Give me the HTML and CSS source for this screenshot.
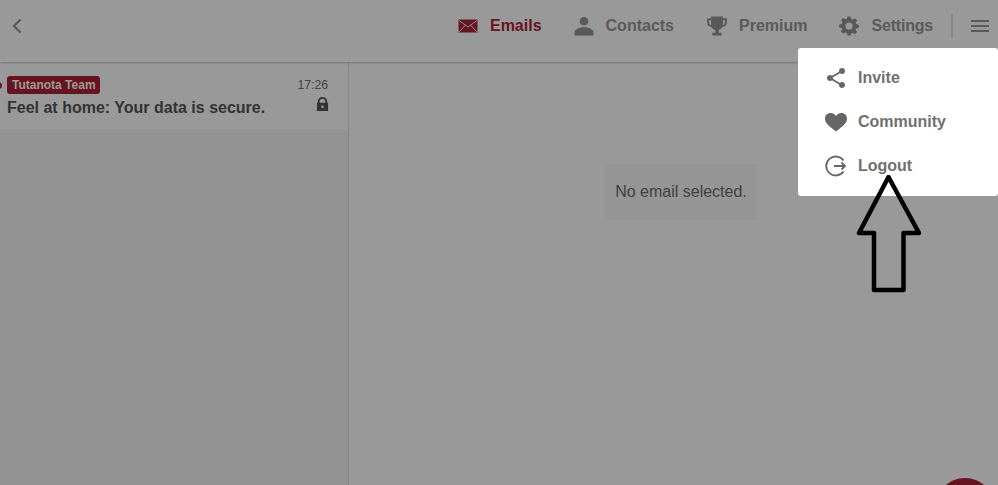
FILE: index.html
```html
<!DOCTYPE html>
<html lang="en">
    <head>
        <meta charset="UTF-8">
        <title>Tutanota</title>
        <link rel="stylesheet" href="styles.css">
    </head>
    <body>

        <header class="header">
            <button class="back" aria-label="Back">
                <svg viewBox="0 0 24 24" width="24" height="24"><path d="M15.500 5.500 9 12l6.500 6.500" fill="none" stroke="#5a5a5a" stroke-width="2.200"/></svg>
            </button>
            <nav class="nav">
                <a class="nav-item active">
                    <svg viewBox="0 0 24 24" width="24" height="24"><path fill="#651522" d="M2.500 5.500h19v13h-19z"/><path d="M3 6.500l9 6.500 9-6.500M3 18l6.500-7M21 18l-6.500-7" fill="none" stroke="#9a8a8c" stroke-width="1"/></svg>
                    <span>Emails</span>
                </a>
                <a class="nav-item contacts">
                    <svg viewBox="-2 -2 28 28" width="24" height="24"><circle cx="12" cy="6.500" r="5" fill="#595959"/><path fill="#595959" d="M1 23v-4c0-3.500 7-5.500 11-5.500s11 2 11 5.500v4z"/></svg>
                    <span>Contacts</span>
                </a>
                <a class="nav-item">
                    <svg viewBox="-2 -2 28 28" width="24" height="24"><path fill="#595959" d="M5 1h14v2h4.500v5c0 3-2 5-5.100 5.300-.8 1.700-2.400 3-4.400 3.400V20h3.500v3h-11v-3H10v-3.300c-2-.4-3.600-1.700-4.400-3.400C2.500 13 .5 11 .5 8V3H5zM2.800 5.300V8c0 1.600.9 2.800 2.200 3.200V5.300zm16.200 0v5.900c1.300-.4 2.200-1.600 2.200-3.200V5.300z"/></svg>
                    <span>Premium</span>
                </a>
                <a class="nav-item settings">
                    <svg viewBox="-3 -3 30 30" width="24" height="24"><path fill="#595959" fill-rule="evenodd" d="M10 0h4l.7 3.300 1.700.7 2.900-1.800 2.800 2.800-1.800 2.900.7 1.700 3.300.7v4l-3.300.7-.7 1.700 1.800 2.900-2.800 2.800-2.900-1.800-1.700.7L14 24h-4l-.7-3.300-1.700-.7-2.900 1.800-2.800-2.800 1.800-2.900-.7-1.700L-.3 14v-4L3 9.300l.7-1.700-1.800-2.900 2.800-2.800 2.900 1.800 1.700-.7zM12 7.500a4.500 4.500 0 1 0 0 9 4.500 4.500 0 0 0 0-9z"/></svg>
                    <span>Settings</span>
                </a>
                <div class="divider"></div>
                <button class="menu-btn" aria-label="Menu">
                    <span></span><span></span><span></span>
                </button>
            </nav>
        </header>

        <main class="columns">
            <section class="list">
                <div class="mail-row">
                    <div class="mail-top">
                        <span class="dot"></span>
                        <span class="badge">Tutanota Team</span>
                        <span class="time">17:26</span>
                    </div>
                    <div class="mail-bottom">
                        <span class="subject">Feel at home: Your data is secure.</span>
                        <svg class="lock" viewBox="0 0 14 16" width="13" height="15"><path fill="#333" fill-rule="evenodd" d="M2 6V4.500a5 4.500 0 0 1 10 0V6h1v9H1V6zm2 0h6V4.500a3 2.800 0 0 0-6 0zm3 3a1.500 1.500 0 1 0 0 3 1.500 1.500 0 0 0 0-3z"/></svg>
                    </div>
                </div>
            </section>
            <section class="viewer">
                <div class="empty">No email selected.</div>
            </section>
        </main>

        <div class="dropdown">
            <a class="drop-item">
                <svg viewBox="0 0 24 24" width="24" height="24"><path fill="#666" d="M18 16.100c-.8 0-1.500.3-2 .8L8.900 12.700c.1-.2.1-.5.1-.7s0-.5-.1-.7L16 7.200c.5.500 1.200.8 2 .8 1.700 0 3-1.300 3-3s-1.300-3-3-3-3 1.300-3 3c0 .2 0 .5.100.7L8 9.800C7.500 9.300 6.800 9 6 9c-1.700 0-3 1.300-3 3s1.300 3 3 3c.8 0 1.500-.3 2-.8l7.100 4.200c-.1.200-.1.400-.1.600 0 1.600 1.300 2.900 3 2.900s3-1.300 3-2.900-1.300-2.900-3-2.900z"/></svg>
                <span>Invite</span>
            </a>
            <a class="drop-item">
                <svg viewBox="0 0 24 24" width="24" height="24"><path fill="#666" d="M12 21.500C5 16 1 13 1 8.500 1 5.300 3.500 3 6.500 3c2.300 0 4.300 1 5.500 3 1.200-2 3.200-3 5.500-3C20.500 3 23 5.300 23 8.500c0 4.500-4 7.500-11 13z"/></svg>
                <span>Community</span>
            </a>
            <a class="drop-item">
                <svg viewBox="0 0 24 24" width="24" height="24"><path fill="none" stroke="#666" stroke-width="1.800" d="M19.500 6.500A9.500 9.500 0 1 0 19.500 17.500M10 12H21M17.500 8.500 21 12l-3.500 3.500"/></svg>
                <span>Logout</span>
            </a>
        </div>

        <svg class="arrow" viewBox="0 0 70 125" width="70" height="125">
            <path d="M34.500 2 5 58h15v57h29.500V58H65z" fill="none" stroke="#000" stroke-width="4.500" stroke-linejoin="round"/>
        </svg>

        <div class="fab"></div>

    </body>
</html>
```

FILE: styles.css
```css
html, body {
    overflow: hidden;
}
body {
    margin: 0;
    height: 485px;
    position: relative;
    display: flex;
    flex-direction: column;
    font-family: "Liberation Sans", Arial, sans-serif;
    background: #999999;
    color: #333333;
}
svg {
    display: block;
    flex: none;
}
button {
    background: none;
    border: 0;
    padding: 0;
}
.header {
    height: 62px;
    flex: none;
    display: flex;
    align-items: center;
    justify-content: space-between;
    padding: 0 9px 10px 5px;
    box-sizing: border-box;
    box-shadow: 0 1px 2px rgba(0, 0, 0, 0.25);
    position: relative;
}
.nav {
    display: flex;
    align-items: center;
}
.nav-item {
    display: flex;
    align-items: center;
    gap: 10px;
    margin-right: 30px;
    font-size: 16px;
    font-weight: bold;
    color: #5a5a5a;
}
.nav-item.active {
    color: #651522;
}
.nav-item.contacts {
    margin-right: 31px;
}
.nav-item.settings {
    margin-right: 18px;
    letter-spacing: -0.2px;
}
.divider {
    width: 2px;
    height: 24px;
    background: #888888;
}
.menu-btn {
    margin-left: 18px;
    width: 18px;
    display: flex;
    flex-direction: column;
    gap: 3px;
}
.menu-btn span {
    height: 2px;
    background: #595959;
}
.columns {
    flex: 1;
    display: flex;
}
.list {
    width: 348px;
    flex: none;
    background: #949494;
    border-right: 1px solid #858585;
}
.mail-row {
    height: 67px;
    background: #999999;
    padding: 14px 20px 0 7px;
    box-sizing: border-box;
}
.mail-top {
    display: flex;
    align-items: center;
    position: relative;
}
.dot {
    position: absolute;
    left: -12px;
    width: 7px;
    height: 7px;
    border-radius: 50%;
    background: #651522;
}
.badge {
    background: #651522;
    color: #a39a90;
    font-size: 12px;
    font-weight: bold;
    line-height: 18px;
    padding: 0 4px 0 5px;
    border-radius: 3px;
}
.time {
    margin-left: auto;
    font-size: 12.200px;
    color: #444444;
}
.mail-bottom {
    display: flex;
    align-items: flex-start;
    justify-content: space-between;
    margin-top: 1px;
}
.subject {
    font-size: 16px;
    font-weight: bold;
    line-height: 24px;
    margin-top: 1px;
}
.lock {
    margin-top: 2px;
    margin-right: -1px;
}
.viewer {
    flex: 1;
    display: flex;
    justify-content: center;
    padding: 102px 0 0 15px;
}
.empty {
    height: 56px;
    box-sizing: border-box;
    padding: 0 10px;
    line-height: 55px;
    font-size: 16px;
    background: #959595;
    color: #404040;
}
.dropdown {
    position: absolute;
    top: 48px;
    right: 0;
    width: 200px;
    height: 148px;
    padding: 8px 0 0 26px;
    box-sizing: border-box;
    background: #ffffff;
    border-radius: 3px;
}
.drop-item {
    height: 44px;
    display: flex;
    align-items: center;
    gap: 10px;
    font-size: 16px;
    font-weight: bold;
    color: #707070;
}
.arrow {
    position: absolute;
    left: 854px;
    top: 175px;
}
.fab {
    position: absolute;
    left: 935px;
    top: 478px;
    width: 60px;
    height: 7px;
    overflow: hidden;
}
.fab::before {
    content: "";
    display: block;
    width: 60px;
    height: 60px;
    border-radius: 50%;
    background: #651522;
}
```
